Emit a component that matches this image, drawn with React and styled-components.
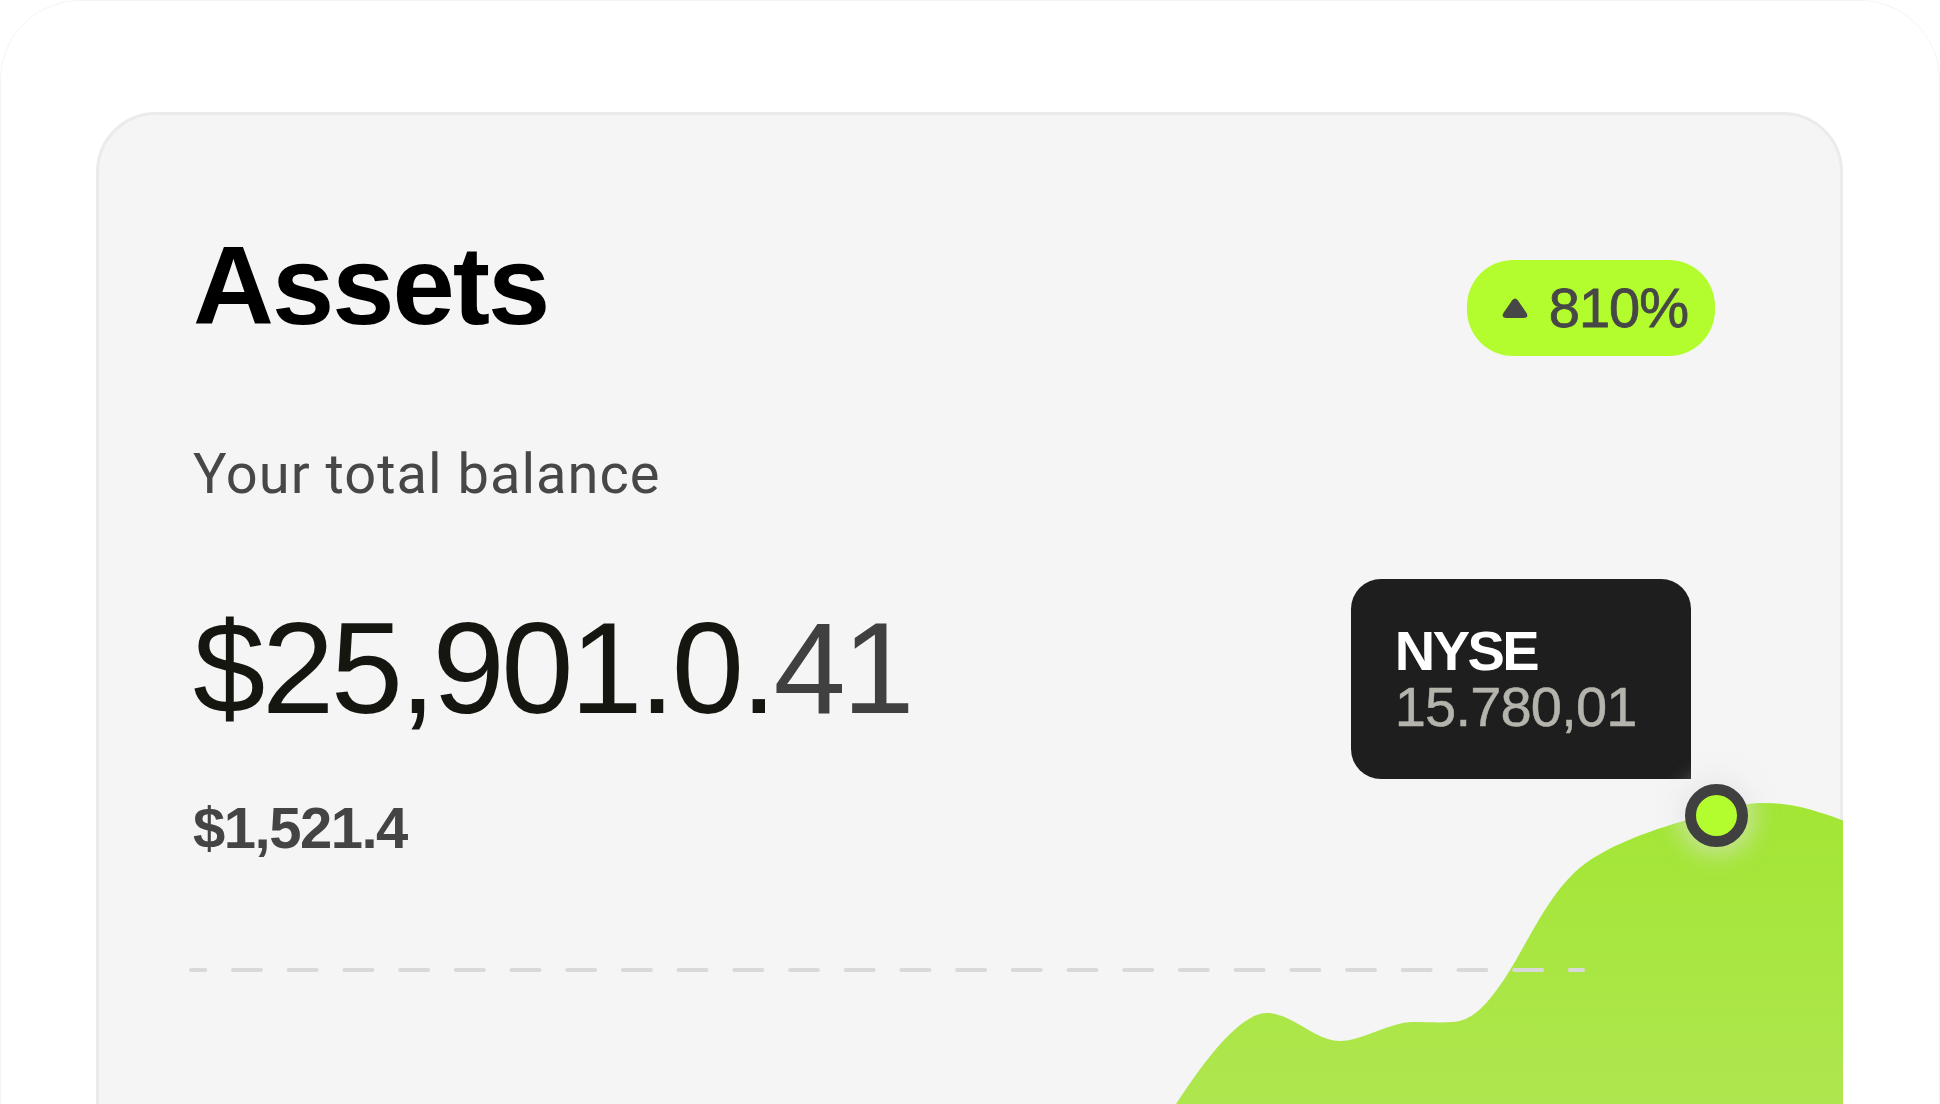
import React from "react";
import styled, { createGlobalStyle } from "styled-components";

const GlobalStyle = createGlobalStyle`
  html, body {
    margin: 0;
    padding: 0;
    background: #fff;
    height: 1104px;
    overflow: hidden;
  }
  * {
    box-sizing: border-box;
  }
`;

const Page = styled.div`
  width: 1940px;
  height: 1300px;
  padding: 111px 0 0 95px;
  border: 1px solid #f4f4f4;
  border-radius: 80px;
`;

const Card = styled.section`
  position: relative;
  width: 1747px;
  height: 1200px;
  padding: 115px 125px 0 94px;
  display: flex;
  flex-direction: column;
  align-items: flex-start;
  background: #f5f5f5;
  border: 3px solid #ebebeb;
  border-radius: 60px;
`;

const Header = styled.div`
  width: 100%;
  display: flex;
  justify-content: space-between;
  align-items: flex-start;
`;

const Title = styled.h1`
  margin: 0;
  font-family: "Liberation Sans", Arial, sans-serif;
  font-weight: 700;
  font-size: 112px;
  line-height: 1;
  letter-spacing: -2px;
  color: #000;
`;

const Badge = styled.div`
  margin-top: 30px;
  height: 96px;
  padding: 0 27px 0 35px;
  display: inline-flex;
  align-items: center;
  gap: 21px;
  background: #b3fd2f;
  border-radius: 46px;
`;

const BadgeValue = styled.span`
  font-family: "Liberation Sans", Arial, sans-serif;
  font-size: 56px;
  line-height: 1;
  letter-spacing: -1px;
  color: #474747;
  -webkit-text-stroke: 0.8px #474747;
`;

const Subtitle = styled.p`
  margin: 90px 0 0;
  font-family: Roboto, "Liberation Sans", sans-serif;
  font-weight: 400;
  font-size: 56px;
  line-height: 1;
  letter-spacing: 1px;
  color: #474747;
`;

const Amount = styled.div`
  margin-top: 101px;
  font-family: "Liberation Sans", Arial, sans-serif;
  font-weight: 400;
  font-size: 130px;
  line-height: 1;
  letter-spacing: -3.4px;
  color: #15160f;
`;

const Muted = styled.span`
  color: #404040;
`;

const SubAmount = styled.div`
  margin-top: 66px;
  font-family: "Liberation Sans", Arial, sans-serif;
  font-weight: 700;
  font-size: 58px;
  line-height: 1;
  letter-spacing: -1.5px;
  color: #444;
`;

const Divider = styled.svg`
  position: relative;
  z-index: 1;
  display: block;
  margin: 111px 0 0 -4px;
`;

const ChartLayer = styled.svg`
  position: absolute;
  z-index: 0;
  left: 1061px;
  top: 665px;
  width: 683px;
  height: 424px;
`;

const PointAnchor = styled.div`
  position: absolute;
  z-index: 2;
  left: ${(p) => p.x}px;
  top: ${(p) => p.y}px;
  width: 0;
  height: 0;
`;

const Dot = styled.div`
  position: absolute;
  left: -31.5px;
  top: -31.5px;
  width: 63px;
  height: 63px;
  border: 11.7px solid #404040;
  border-radius: 50%;
  background: #b3fd2f;
  box-shadow: 0 0 22px 8px rgba(226, 226, 226, 0.55);
`;

const Tooltip = styled.div`
  position: absolute;
  right: 26px;
  bottom: 37px;
  width: 340px;
  height: 200px;
  padding: 44px;
  background: #1e1e1e;
  border-radius: 30px 30px 0 30px;
  font-family: "Liberation Sans", Arial, sans-serif;
  font-size: 56px;
  line-height: 1;
`;

const TooltipTitle = styled.div`
  font-weight: 700;
  letter-spacing: -2.5px;
  color: #fff;
`;

const TooltipValue = styled.div`
  font-weight: 400;
  letter-spacing: -0.8px;
  color: #b4b3ac;
  -webkit-text-stroke: 0.5px #b4b3ac;
`;

const areaPath =
  "M1176,1104 C1205,1060 1240,1013 1267,1013 C1292,1013 1315,1041 1340,1041 " +
  "C1362,1041 1390,1022 1413,1022 C1430,1022 1440,1023 1452,1022 " +
  "C1475,1021 1490,1000 1505,978 C1525,948 1545,900 1575,872 " +
  "C1600,849 1640,834 1680,822 C1715,811 1740,803 1765,803 " +
  "C1795,803 1820,812 1850,823 L1850,1210 L1176,1210 Z";

const TriangleUp = () => (
  <svg width="26" height="21" viewBox="0 0 26 21">
    <path
      d="M10.2 2.2 Q13 -1.2 15.8 2.2 L24.6 15 Q27 20 21.5 20 L4.5 20 Q-1 20 1.4 15 Z"
      fill="#474747"
    />
  </svg>
);

export default function App() {
  return (
    <>
      <GlobalStyle />
      <Page>
        <Card>
          <ChartLayer viewBox="1160 780 683 424">
            <defs>
              <linearGradient id="area" x1="0" y1="0" x2="0" y2="1">
                <stop offset="0%" stopColor="#a3e635" />
                <stop offset="75%" stopColor="#afe64f" />
              </linearGradient>
            </defs>
            <path d={areaPath} fill="url(#area)" />
          </ChartLayer>

          <Header>
            <Title>Assets</Title>
            <Badge>
              <TriangleUp />
              <BadgeValue>810%</BadgeValue>
            </Badge>
          </Header>

          <Subtitle>Your total balance</Subtitle>
          <Amount>
            $25,901.0.<Muted>41</Muted>
          </Amount>
          <SubAmount>$1,521.4</SubAmount>

          <Divider width="1400" height="4" viewBox="189 968 1400 4">
            <line
              x1="191"
              y1="970"
              x2="1583"
              y2="970"
              stroke="#d9d9d9"
              strokeWidth="4"
              strokeLinecap="round"
              strokeDasharray="28 27.7"
              strokeDashoffset="13.7"
            />
          </Divider>

          <PointAnchor x={1617.7} y={700.7}>
            <Tooltip>
              <TooltipTitle>NYSE</TooltipTitle>
              <TooltipValue>15.780,01</TooltipValue>
            </Tooltip>
            <Dot />
          </PointAnchor>
        </Card>
      </Page>
    </>
  );
}
